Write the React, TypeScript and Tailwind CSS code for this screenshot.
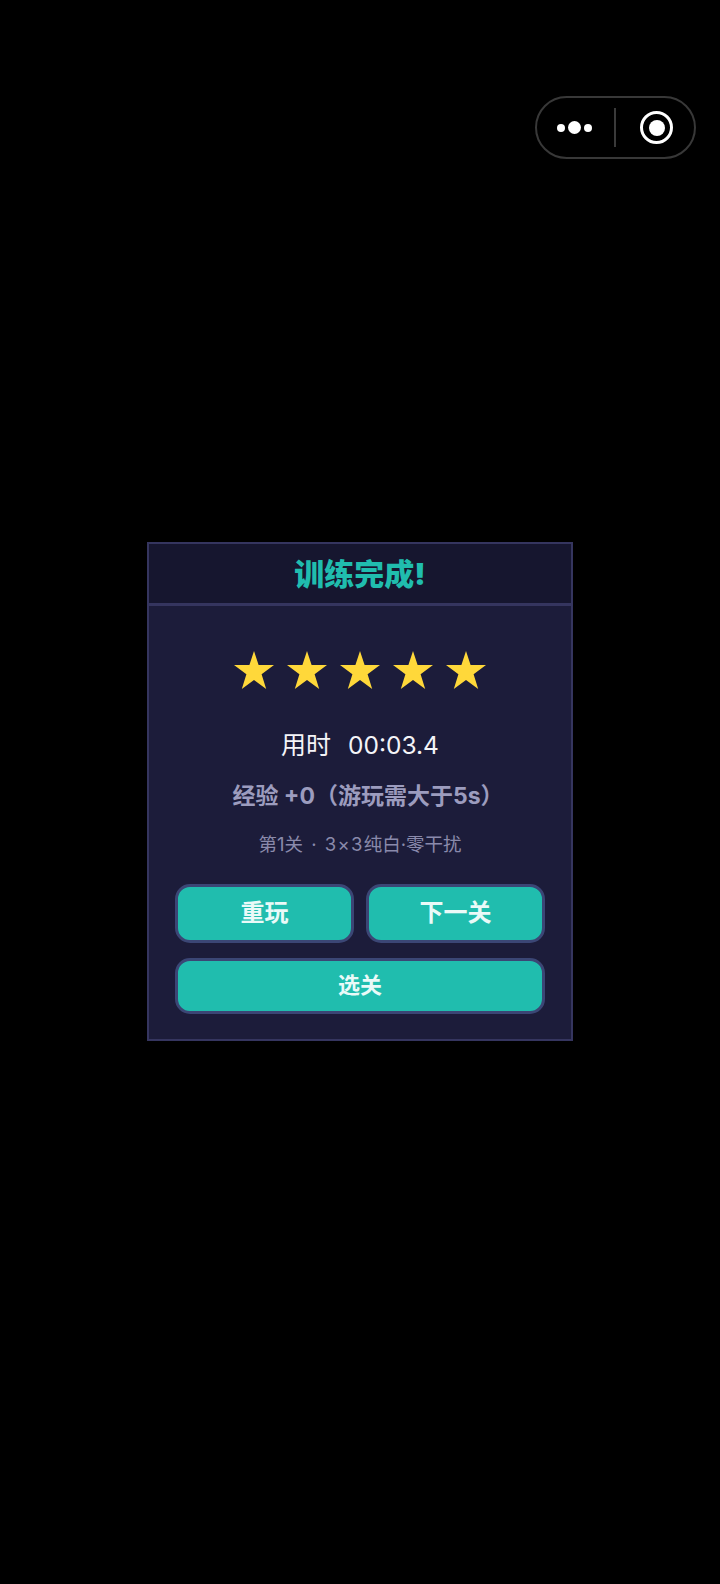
import React from "react";

const font = { fontFamily: '"Inter", "Noto Sans CJK SC", sans-serif' };

function Star() {
  return (
    <svg width="40" height="40" viewBox="0 0 40 40" className="block">
      <polygon fill="#ffd83a" points="20,1 24.6,15 40,15 27.6,24.2 32.2,39 20,30 7.8,39 12.4,24.2 0,15 15.4,15" />
    </svg>
  );
}

function Btn({ children, className }: { children: React.ReactNode; className: string }) {
  return (
    <div className={"flex items-center justify-center rounded-[15px] border-[3px] border-[#3b4675] bg-[#20bdae] font-bold text-[#eafaf8] " + className}>
      {children}
    </div>
  );
}

export default function App() {
  return (
    <div className="relative flex h-[1584px] w-full items-center justify-center bg-black pb-[2px]" style={font}>
      <div className="absolute left-[535px] top-[96px] flex h-[63px] w-[161px] items-center rounded-full border-2 border-[#383838]">
        <div className="flex w-[77px] items-center justify-center gap-[3px] pr-[3px]">
          <span className="h-[8px] w-[8px] rounded-full bg-white" />
          <span className="h-[13px] w-[13px] rounded-full bg-white" />
          <span className="h-[8px] w-[8px] rounded-full bg-white" />
        </div>
        <div className="h-[39px] w-[2px] bg-[#3a3a3a]" />
        <div className="flex flex-1 items-center justify-center pl-[3px]">
          <div className="flex h-[33px] w-[33px] items-center justify-center rounded-full border-[3px] border-white">
            <span className="h-[16px] w-[16px] rounded-full bg-white" />
          </div>
        </div>
      </div>

      <div className="flex w-[426px] flex-col border-2 border-[#35355f] bg-[#1c1c3a]">
        <div className="flex h-[62px] items-center justify-center border-b-[3px] border-[#35355f] bg-[#16162f] pt-[2px] text-[30px] leading-none font-black text-[#20bdae]">
          训练完成!
        </div>
        <div className="flex flex-col items-center px-[26px] pb-[25px] pt-[44px]">
          <div className="flex gap-[13px]">
            <Star />
            <Star />
            <Star />
            <Star />
            <Star />
          </div>
          <div className="mt-[37px] flex gap-[17px] text-[25px] leading-[36px] text-[#f4f4f8]">
            <span>用时</span>
            <span className="text-[24.5px]">00:03.4</span>
          </div>
          <div className="mt-[17px] pl-[16px] text-[23px] leading-[32px] font-bold text-[#9c9cbe]">
            经验 +0（游玩需大于5s）
          </div>
          <div className="mt-[19px] whitespace-pre text-[18.5px] leading-[26px] text-[#8a8aab]">
            第1关 <span className="mx-[3px]">·</span> <span className="tracking-[1.3px]">3×3</span>纯白·零干扰
          </div>
          <div className="mt-[27px] flex w-full gap-[12px]">
            <Btn className="h-[59px] flex-1 text-[24px]">重玩</Btn>
            <Btn className="h-[59px] flex-1 text-[24px]">下一关</Btn>
          </div>
          <Btn className="mt-[15px] h-[56px] w-full text-[22px]">选关</Btn>
        </div>
      </div>
    </div>
  );
}
